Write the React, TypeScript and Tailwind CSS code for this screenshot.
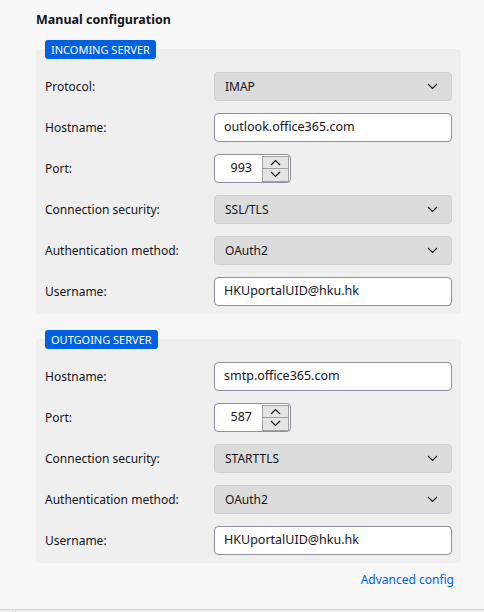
import React from 'react';

const font = { fontFamily: '"Noto Sans", "Open Sans", sans-serif' };

function Chevron({ up = false }: { up?: boolean }) {
  return (
    <svg width="11" height="7" viewBox="0 0 11 7" fill="none" className="shrink-0">
      <path
        d={up ? 'M1 6L5.5 1.5L10 6' : 'M1 1L5.5 5.5L10 1'}
        stroke="#15141a"
        strokeWidth="1.2"
      />
    </svg>
  );
}

function Select({ value }: { value: string }) {
  return (
    <div className="flex h-[29px] w-[238px] items-center justify-between rounded-[4px] border border-[#cfcfd3] bg-[#dcdcdc] pl-[10px] pr-[13px] text-[12px] text-[#15141a]">
      <span>{value}</span>
      <Chevron />
    </div>
  );
}

function TextInput({ value }: { value: string }) {
  return (
    <div className="flex h-[29px] w-[238px] items-center rounded-[4px] border border-[#8f8f9d] bg-white pl-[9px] text-[12.5px] text-[#15141a]">
      {value}
    </div>
  );
}

function PortInput({ value }: { value: string }) {
  return (
    <div className="flex h-[29px] w-[77px] items-center rounded-[4px] border border-[#8f8f9d] bg-white pr-[1px]">
      <span className="flex-1 pr-[10px] text-right text-[12.5px] text-[#15141a]">{value}</span>
      <div className="flex h-[26px] w-[27px] flex-col">
        <div className="flex flex-1 items-center justify-center border border-[#a0a0a0] bg-[#e5e5e5]">
          <Chevron up />
        </div>
        <div className="flex flex-1 items-center justify-center border border-t-0 border-[#a0a0a0] bg-[#e5e5e5]">
          <Chevron />
        </div>
      </div>
    </div>
  );
}

function Row({ label, children }: { label: string; children: React.ReactNode }) {
  return (
    <div className="flex items-center">
      <div className="w-[169px] text-[12px] text-[#15141a]">{label}</div>
      {children}
    </div>
  );
}

function Section({ title, children }: { title: string; children: React.ReactNode }) {
  return (
    <div className="flex flex-col">
      <div className="relative z-10 -mb-[10px] ml-[9px] self-start rounded-[3px] bg-[#0061e0] px-[6px] text-[11px] leading-[19px] text-white">
        {title}
      </div>
      <div className="flex flex-col gap-[12px] rounded-[4px] bg-[#efefef] pb-[8px] pl-[9px] pr-[9px] pt-[23px]">
        {children}
      </div>
    </div>
  );
}

export default function App() {
  return (
    <div className="flex h-[612px] w-full flex-col bg-[#f7f7f7]" style={font}>
      <div className="flex flex-1 flex-col pl-[36px] pr-[23px]">
        <h2 className="pt-[10px] text-[12.5px] font-bold leading-[20px] text-[#15141a]">Manual configuration</h2>
        <div className="mt-[10px]">
          <Section title="INCOMING SERVER">
            <Row label="Protocol:">
              <Select value="IMAP" />
            </Row>
            <Row label="Hostname:">
              <TextInput value="outlook.office365.com" />
            </Row>
            <Row label="Port:">
              <PortInput value="993" />
            </Row>
            <Row label="Connection security:">
              <Select value="SSL/TLS" />
            </Row>
            <Row label="Authentication method:">
              <Select value="OAuth2" />
            </Row>
            <Row label="Username:">
              <TextInput value="HKUportalUID@hku.hk" />
            </Row>
          </Section>
        </div>
        <div className="mt-[16px]">
          <Section title="OUTGOING SERVER">
            <Row label="Hostname:">
              <TextInput value="smtp.office365.com" />
            </Row>
            <Row label="Port:">
              <PortInput value="587" />
            </Row>
            <Row label="Connection security:">
              <Select value="STARTTLS" />
            </Row>
            <Row label="Authentication method:">
              <Select value="OAuth2" />
            </Row>
            <Row label="Username:">
              <TextInput value="HKUportalUID@hku.hk" />
            </Row>
          </Section>
        </div>
        <div className="mt-[8px] flex justify-end pr-[7px]">
          <a className="text-[12px] leading-[18px] text-[#0061e0]" href="#">
            Advanced config
          </a>
        </div>
      </div>
      <div className="flex h-[3px] border-t border-[#d6d6d6] bg-[#f0f0f0]">
        <div className="w-[16px] border-r border-[#d6d6d6]" />
      </div>
    </div>
  );
}
